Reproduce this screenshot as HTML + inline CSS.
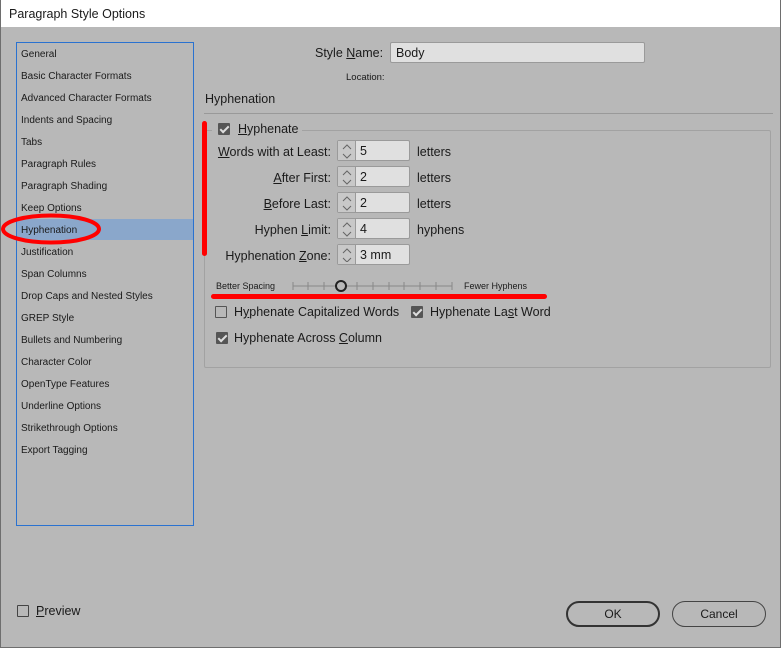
<!DOCTYPE html>
<html><head><style>
*{margin:0;padding:0;box-sizing:border-box}
body{width:781px;height:648px;background:#b8b8b8;font-family:"Liberation Sans",Tahoma,sans-serif;color:#1a1a1a;position:relative;overflow:hidden}
.a{position:absolute;white-space:nowrap}
#win{position:absolute;left:0;top:0;width:781px;height:648px;border:1px solid #6e6e6e;border-top:none}
#title{position:absolute;left:0;top:0;width:781px;height:27px;background:#fff;font-size:12.5px;padding:7px 0 0 9px}
#side{position:absolute;left:16px;top:42px;width:178px;height:484px;border:1px solid #2a72d0}
.it{position:absolute;left:4px;font-size:10px}
.sel{position:absolute;left:0;top:176px;width:176px;height:21px;background:#8aa7cb}
.lab{font-size:12.5px;text-align:right;width:200px}
.box{position:absolute;border:1px solid #9a9a9a;border-radius:2px;background:#e0e0e0;height:21px;width:73px}
.box .sp{position:absolute;left:0;top:0;width:18px;height:19px;border-right:1px solid #9a9a9a;background:#c8c8c8}
.box .v{position:absolute;left:22px;top:3px;font-size:12.5px}
.cb{position:absolute;width:12px;height:12px;border:1px solid #555;border-radius:1px}
.cb.on{background:#555;border-color:#555}
.cb.on:after{content:"";position:absolute;left:3px;top:0px;width:3px;height:7px;border:solid #ddd;border-width:0 2px 2px 0;transform:rotate(45deg)}
.t{font-size:12.5px}
.btn{position:absolute;top:601px;width:94px;height:26px;border-radius:13px;font-size:12px;text-align:center;line-height:23px}
u{text-decoration:underline}
</style></head><body>
<div id="title">Paragraph Style Options</div>
<div id="win"></div>
<div id="side">
<div class="sel"></div>
<div class="it" style="top:6px">General</div>
<div class="it" style="top:28px">Basic Character Formats</div>
<div class="it" style="top:50px">Advanced Character Formats</div>
<div class="it" style="top:72px">Indents and Spacing</div>
<div class="it" style="top:94px">Tabs</div>
<div class="it" style="top:116px">Paragraph Rules</div>
<div class="it" style="top:138px">Paragraph Shading</div>
<div class="it" style="top:160px">Keep Options</div>
<div class="it" style="top:182px">Hyphenation</div>
<div class="it" style="top:204px">Justification</div>
<div class="it" style="top:226px">Span Columns</div>
<div class="it" style="top:248px">Drop Caps and Nested Styles</div>
<div class="it" style="top:270px">GREP Style</div>
<div class="it" style="top:292px">Bullets and Numbering</div>
<div class="it" style="top:314px">Character Color</div>
<div class="it" style="top:336px">OpenType Features</div>
<div class="it" style="top:358px">Underline Options</div>
<div class="it" style="top:380px">Strikethrough Options</div>
<div class="it" style="top:402px">Export Tagging</div>
</div>
<svg class="a" style="left:0;top:210px" width="110" height="40"><ellipse cx="51" cy="19" rx="48" ry="13.5" fill="none" stroke="#f00" stroke-width="4"/></svg>

<div class="a t" style="left:315px;top:46px">Style <u>N</u>ame:</div>
<div class="a" style="left:390px;top:42px;width:255px;height:21px;border:1px solid #9a9a9a;border-radius:2px;background:#e0e0e0;font-size:12.5px;padding:3px 5px">Body</div>
<div class="a" style="left:346px;top:72px;font-size:9.5px">Location:</div>
<div class="a" style="left:205px;top:92px;font-size:12.5px">Hyphenation</div>
<div class="a" style="left:204px;top:113px;width:569px;height:1px;background:#999"></div>

<div class="a" style="left:204px;top:130px;width:567px;height:238px;border:1px solid #a2a2a2;border-radius:2px"></div>
<div class="a" style="left:212px;top:122px;width:90px;height:14px;background:#b8b8b8"></div>
<div class="cb on" style="left:218px;top:123px"></div>
<div class="a t" style="left:238px;top:122px"><u>H</u>yphenate</div>

<div class="a lab" style="left:131px;top:145px"><u>W</u>ords with at Least:</div>
<div class="a lab" style="left:131px;top:171px"><u>A</u>fter First:</div>
<div class="a lab" style="left:131px;top:197px"><u>B</u>efore Last:</div>
<div class="a lab" style="left:131px;top:223px">Hyphen <u>L</u>imit:</div>
<div class="a lab" style="left:131px;top:249px">Hyphenation <u>Z</u>one:</div>
<div class="box" style="left:337px;top:140px"><div class="sp"></div><div class="v">5</div></div>
<div class="box" style="left:337px;top:166px"><div class="sp"></div><div class="v">2</div></div>
<div class="box" style="left:337px;top:192px"><div class="sp"></div><div class="v">2</div></div>
<div class="box" style="left:337px;top:218px"><div class="sp"></div><div class="v">4</div></div>
<div class="box" style="left:337px;top:244px"><div class="sp"></div><div class="v">3 mm</div></div>
<svg class="a" style="left:339px;top:142px" width="16" height="120" fill="none" stroke="#666" stroke-width="1">
<g id="ch"><path d="M4 7 L8 3 L12 7 M4 12 L8 16 L12 12"/></g>
<use href="#ch" y="26"/><use href="#ch" y="52"/><use href="#ch" y="78"/><use href="#ch" y="104"/></svg>
<div class="a t" style="left:417px;top:145px">letters</div>
<div class="a t" style="left:417px;top:171px">letters</div>
<div class="a t" style="left:417px;top:197px">letters</div>
<div class="a t" style="left:417px;top:223px">hyphens</div>

<div class="a" style="left:216px;top:281px;font-size:9px">Better Spacing</div>
<svg class="a" style="left:290px;top:278px" width="168" height="16" stroke="#888" fill="none">
<path d="M3 8 H162"/>
<path d="M3 4V12M18 4V12M34 4V12M67 4V12M83 4V12M99 4V12M114 4V12M130 4V12M146 4V12M162 4V12"/>
<circle cx="51" cy="8" r="5" stroke="#222" stroke-width="2" fill="#b8b8b8"/></svg>
<div class="a" style="left:464px;top:281px;font-size:9px">Fewer Hyphens</div>

<div class="cb" style="left:215px;top:306px"></div>
<div class="a t" style="left:234px;top:305px">H<u>y</u>phenate Capitalized Words</div>
<div class="cb on" style="left:411px;top:306px"></div>
<div class="a t" style="left:430px;top:305px">Hyphenate La<u>s</u>t Word</div>
<div class="cb on" style="left:216px;top:332px"></div>
<div class="a t" style="left:234px;top:331px">Hyphenate Across <u>C</u>olumn</div>

<div class="a" style="left:202px;top:121px;width:5px;height:135px;background:#f00;border-radius:3px"></div>
<div class="a" style="left:211px;top:294px;width:336px;height:5px;background:#f00;border-radius:3px"></div>

<div class="cb" style="left:17px;top:605px;border-color:#444"></div>
<div class="a t" style="left:36px;top:604px"><u>P</u>review</div>
<div class="btn" style="left:566px;border:2px solid #333">OK</div>
<div class="btn" style="left:672px;border:1px solid #444;line-height:25px">Cancel</div>
</body></html>
